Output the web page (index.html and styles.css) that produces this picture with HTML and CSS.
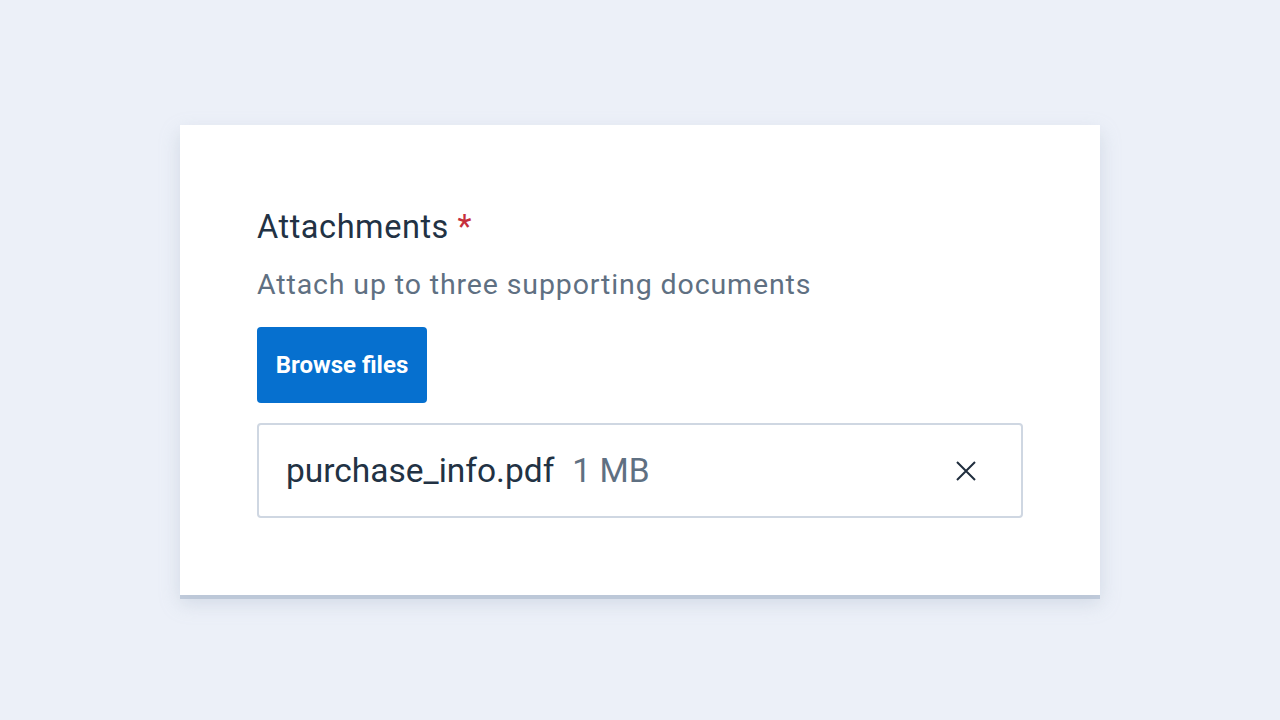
FILE: index.html
```html
<!DOCTYPE html>
<html lang="en">
<head>
<meta charset="utf-8">
<title>Attachments</title>
<link rel="stylesheet" href="styles.css">
</head>
<body>
<main class="page">
  <section class="card">
    <div class="field">
      <div class="label">Attachments <span class="req">*</span></div>
      <div class="hint">Attach up to three supporting documents</div>
      <button class="browse" type="button">Browse files</button>
      <div class="file">
        <span class="name">purchase_info.pdf</span>
        <span class="size">1 MB</span>
        <button class="remove" type="button" aria-label="Remove">
          <svg width="20" height="20" viewBox="0 0 20 20" fill="none" stroke="#1f2d3d" stroke-width="2">
            <path d="M1 1 L19 19 M19 1 L1 19"/>
          </svg>
        </button>
      </div>
    </div>
  </section>
</main>
</body>
</html>
```
FILE: styles.css
```css
html, body {
  margin: 0;
  padding: 0;
}
body {
  background: #ecf0f8;
  font-family: Roboto, "Liberation Sans", sans-serif;
  width: 1280px;
  height: 720px;
  overflow: hidden;
}
.page {
  padding-top: 125px;
  display: flex;
  justify-content: center;
}
.card {
  width: 920px;
  height: 470px;
  box-sizing: border-box;
  background: #ffffff;
  box-shadow: 0 4px 0 0 rgba(176, 190, 208, 0.7), 0 8px 18px rgba(160, 175, 195, 0.35);
  padding: 80px 77px 0 77px;
}
.field {
  display: flex;
  flex-direction: column;
  align-items: flex-start;
}
.label {
  font-size: 32.5px;
  letter-spacing: 0.55px;
  color: #223244;
  line-height: 44px;
}
.req {
  color: #c62f3c;
}
.hint {
  margin-top: 18px;
  font-size: 28.5px;
  color: #5f7082;
  letter-spacing: 0.88px;
  line-height: 36px;
}
.browse {
  margin-top: 24px;
  width: 170px;
  height: 76px;
  border: none;
  border-radius: 4px;
  background: #0670cf;
  color: #ffffff;
  font-family: Roboto, "Liberation Sans", sans-serif;
  font-weight: 700;
  font-size: 24px;
  padding: 0;
}
.file {
  margin-top: 20px;
  width: 766px;
  height: 95px;
  box-sizing: border-box;
  border: 2px solid #cfd7e2;
  border-radius: 4px;
  display: flex;
  align-items: center;
  padding: 0 45px 0 27px;
}
.name {
  font-size: 33.5px;
  color: #223244;
}
.size {
  margin-left: 18px;
  font-size: 33.5px;
  color: #5f7082;
}
.remove {
  margin-left: auto;
  background: none;
  border: none;
  padding: 0;
  width: 20px;
  height: 20px;
  display: flex;
}
```
